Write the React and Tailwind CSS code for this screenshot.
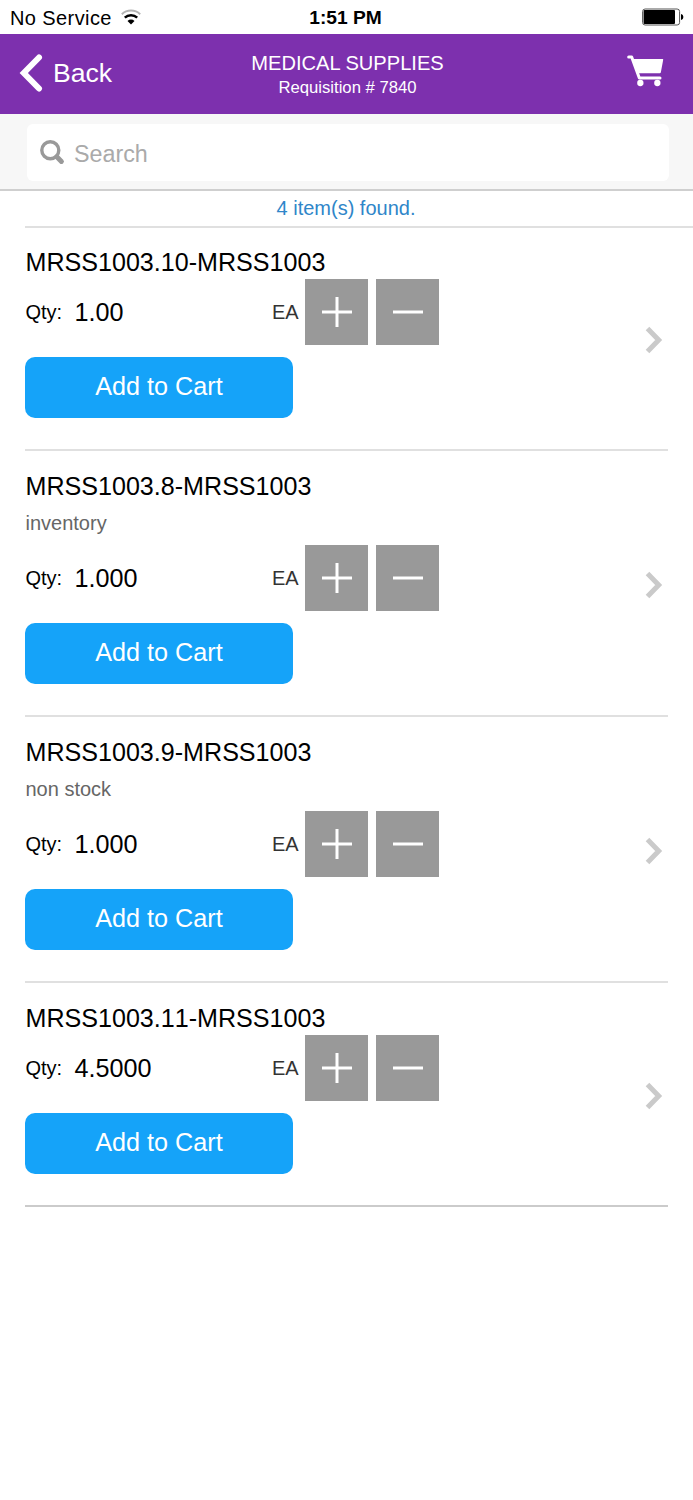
import React, { useState } from 'react';

const initialItems = [
  { id: 1, name: 'MRSS1003.10-MRSS1003', qty: '1.00', unit: 'EA' },
  { id: 2, name: 'MRSS1003.8-MRSS1003', note: 'inventory', qty: '1.000', unit: 'EA' },
  { id: 3, name: 'MRSS1003.9-MRSS1003', note: 'non stock', qty: '1.000', unit: 'EA' },
  { id: 4, name: 'MRSS1003.11-MRSS1003', qty: '4.5000', unit: 'EA' }
];

const WifiIcon = () => (
  <svg className="w-5 h-4 mb-0.5" viewBox="0 0 20 16" fill="none">
    <path d="M0.8 5.2a13.6 13.6 0 0 1 18.4 0" stroke="#b4b4b4" strokeWidth="2" />
    <path d="M3.800 8.700a9 9 0 0 1 12.400 0" stroke="#000" strokeWidth="2.5" />
    <path d="M6.500 12a5 5 0 0 1 7 0L10 15.600Z" fill="#000" />
  </svg>
);

const BatteryIcon = () => (
  <svg className="w-[42px] h-[18px]" viewBox="0 0 42 18" fill="none">
    <rect x="0.6" y="1" width="37" height="16" rx="2.5" stroke="#555" strokeWidth="1" />
    <rect x="1.6" y="2" width="31.4" height="14" rx="1" fill="#000" />
    <path d="M39 6c1.6.4 2.3 1.4 2.3 3s-.7 2.6-2.3 3Z" fill="#000" />
  </svg>
);

const CartIcon = () => (
  <svg className="w-[38px] h-[33px]" viewBox="0 0 114 99" fill="#fff">
    <path d="M8 9h9L40 72h62" fill="none" stroke="#fff" strokeWidth="9" strokeLinecap="round" strokeLinejoin="round" />
    <path d="M22 15h88q2 0 1.600 2l-7 38q-.5 3-3.500 3H36Z" />
    <circle cx="43" cy="87" r="9.500" />
    <circle cx="94" cy="87" r="9.500" />
  </svg>
);

const SearchIcon = () => (
  <svg className="w-[25px] h-[25px]" viewBox="0 0 25 25" fill="none" stroke="#999">
    <circle cx="10.300" cy="10.300" r="8.500" strokeWidth="3.400" />
    <path d="M16.800 16.800l4.600 4.600" strokeWidth="5" strokeLinecap="round" />
  </svg>
);

const ItemRow = ({ item, last, onChange }) => (
  <li className={`flex items-center justify-between border-b-2 pt-5 pb-[31.5px] first:pt-[19px] ${last ? 'border-[#cbcbcb]' : 'border-[#e0e0e0]'}`}>
    <div>
      <h2 className="mb-px pl-[0.5px] text-[25.1px] leading-[31px] text-black [font-kerning:none]">{item.name}</h2>
      {item.note && <p className="h-[42px] pt-[9px] pl-[0.5px] text-[20px] leading-[23px] text-[#666]">{item.note}</p>}
      <div className="flex items-center h-[65.5px] text-[20px]">
        <span className="w-[49.5px] pt-px pl-[0.5px] text-black">Qty:</span>
        <span className="w-[197.500px] pt-0.5 text-[25.2px] text-black [font-kerning:none]">{item.qty}</span>
        <span className="w-[33px] pt-px text-[#333]">{item.unit}</span>
        <button
          className="flex items-center justify-center w-[63px] h-full mr-2 bg-[#999]"
          aria-label="Increase"
          onClick={() => onChange(item.id, 1)}
        >
          <svg className="w-[30px] h-[30px]" viewBox="0 0 30 30" stroke="#fff" strokeWidth="3">
            <path d="M0 15h30M15 0v30" />
          </svg>
        </button>
        <button
          className="flex items-center justify-center w-[63px] h-full bg-[#999]"
          aria-label="Decrease"
          onClick={() => onChange(item.id, -1)}
        >
          <svg className="w-[30px] h-[30px]" viewBox="0 0 30 30" stroke="#fff" strokeWidth="3">
            <path d="M0 15h30" />
          </svg>
        </button>
      </div>
      <button className="block w-[268px] h-[61px] mt-3 pb-px rounded-[10px] bg-[#15a3f9] text-[25.2px] text-white">
        Add to Cart
      </button>
    </div>
    <svg className="w-[18px] h-7 mr-[5px] mt-4" viewBox="0 0 18 28" fill="none" stroke="#cacaca" strokeWidth="5">
      <path d="M2.500 2.500L13.700 14L2.500 25.500" />
    </svg>
  </li>
);

const App = () => {
  const [items, setItems] = useState(initialItems);
  const [query, setQuery] = useState('');

  const changeQty = (id, step) => {
    setItems(items.map((item) => {
      if (item.id !== id) return item;
      const decimals = item.qty.split('.')[1].length;
      return { ...item, qty: Math.max(0, Number(item.qty) + step).toFixed(decimals) };
    }));
  };

  const visibleItems = items.filter((item) => item.name.toLowerCase().includes(query.toLowerCase()));

  return (
    <div className="min-h-screen bg-white font-['Liberation_Sans',Arial,sans-serif]">
      <div className="grid grid-cols-3 items-center h-[34px] pl-[10px] pr-[9px] text-black">
        <div className="flex items-center gap-[9px] pt-px">
          <span className="text-[20px] leading-6 tracking-[0.4px] whitespace-nowrap">No Service</span>
          <WifiIcon />
        </div>
        <span className="pr-[3px] text-center text-[19.2px] leading-6 font-bold pt-px">1:51 PM</span>
        <div className="flex justify-end">
          <BatteryIcon />
        </div>
      </div>

      <header className="grid grid-cols-3 items-center h-20 pl-[19px] pr-[29px] bg-[#7d30ae] text-white">
        <button className="flex items-center gap-[10px] pb-[3px]">
          <svg className="w-6 h-10" viewBox="0 0 24 40" fill="none" stroke="#fff" strokeWidth="6">
            <path d="M20 4.500L4.800 20L20 35.500" strokeLinecap="round" />
          </svg>
          <span className="text-[26.6px] leading-8">Back</span>
        </button>
        <div className="pl-[12px] pt-0.5 text-center whitespace-nowrap">
          <h1 className="text-[20.1px] leading-[26px]">MEDICAL SUPPLIES</h1>
          <p className="text-[16.7px] leading-6">Requisition # 7840</p>
        </div>
        <div className="flex justify-end pb-[7px]">
          <CartIcon />
        </div>
      </header>

      <div className="h-[77px] pt-[10px] pl-[27px] pr-[24px] bg-[#f7f7f7] border-b-2 border-[#cfcfcf]">
        <label className="flex items-center gap-[9px] h-[57px] pl-[13px] rounded-md bg-white">
          <SearchIcon />
          <input
            className="flex-1 pt-0.5 text-[23.3px] leading-7 outline-none placeholder:text-[#aaa]"
            placeholder="Search"
            value={query}
            onChange={(e) => setQuery(e.target.value)}
          />
        </label>
      </div>

      <div className="ml-[25px]">
        <p className="h-[37px] pr-[26px] border-b-2 border-[#e0e0e0] text-center text-[20px] leading-[34px] text-[#2f86c9]">
          {visibleItems.length} item(s) found.
        </p>
        <ul className="mr-[25px]">
          {visibleItems.map((item, i) => (
            <ItemRow key={item.id} item={item} last={i === visibleItems.length - 1} onChange={changeQty} />
          ))}
        </ul>
      </div>
    </div>
  );
};

export default App;
